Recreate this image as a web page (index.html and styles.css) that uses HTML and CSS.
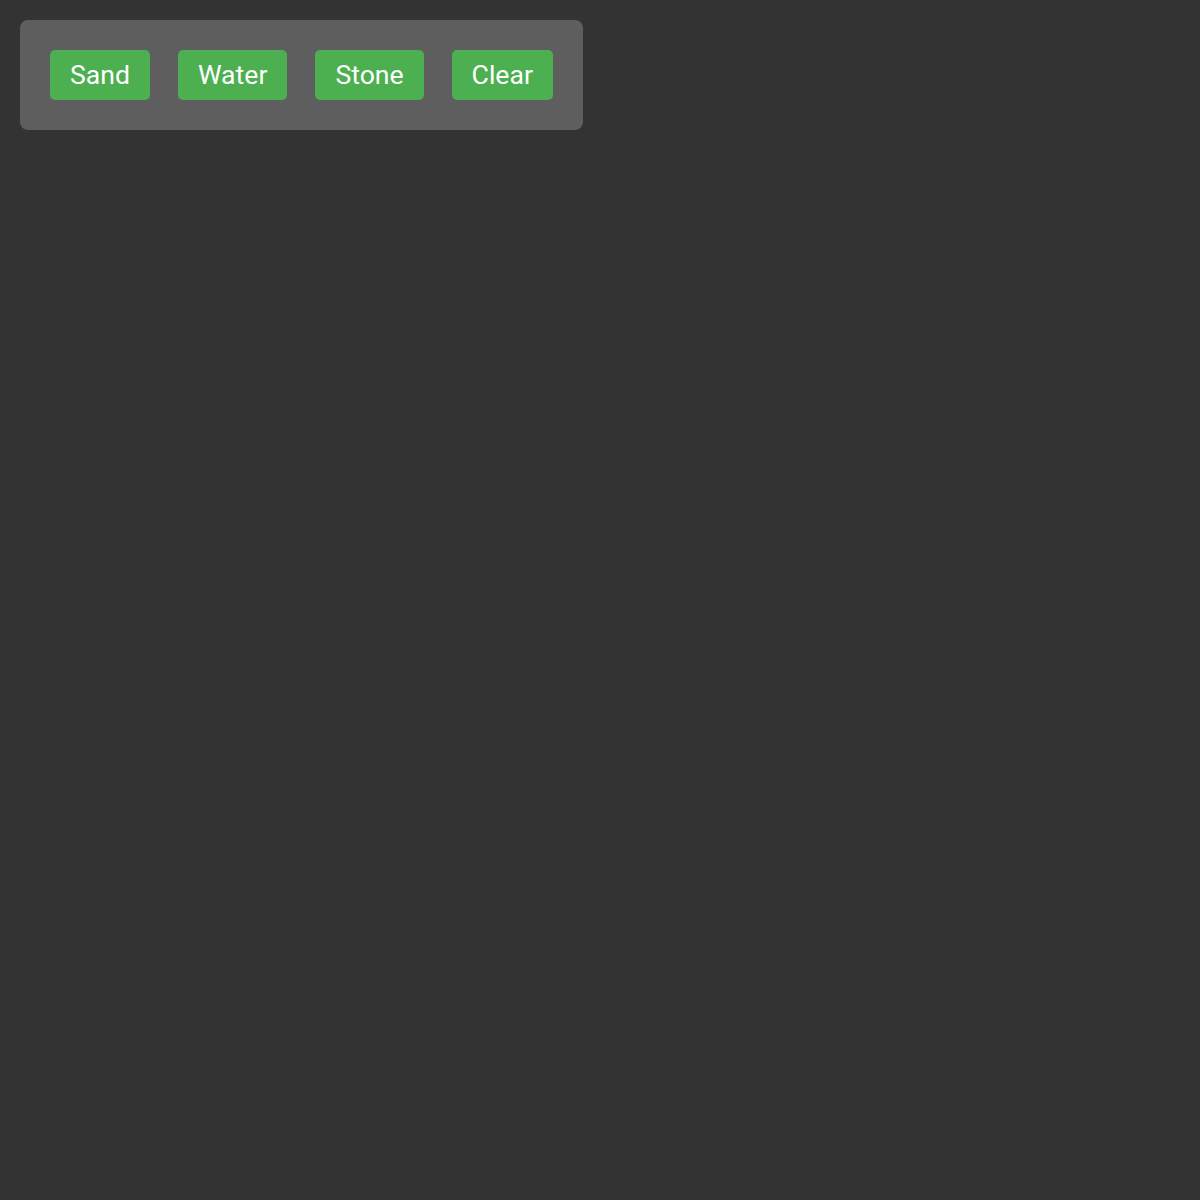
FILE: index.html
```html
<!DOCTYPE html>
<html>
<head>
<meta charset="utf-8">
<link rel="stylesheet" href="styles.css">
</head>
<body>
<div class="panel">
  <button class="btn">Sand</button>
  <button class="btn">Water</button>
  <button class="btn">Stone</button>
  <button class="btn">Clear</button>
</div>
</body>
</html>
```
FILE: styles.css
```css
html, body {
  margin: 0;
  padding: 0;
  background: #333333;
  height: 100%;
}
body {
  padding: 20px;
  box-sizing: border-box;
  font-family: Roboto, "Liberation Sans", sans-serif;
}
.panel {
  display: inline-flex;
  gap: 28px;
  padding: 30px;
  background: #5e5e5e;
  border-radius: 8px;
}
.btn {
  font-family: Roboto, "Liberation Sans", sans-serif;
  font-size: 26.6px;
  line-height: 30px;
  height: 50px;
  padding: 10px 20px;
  border: none;
  border-radius: 5px;
  background: #4caf50;
  color: #ffffff;
}
```
